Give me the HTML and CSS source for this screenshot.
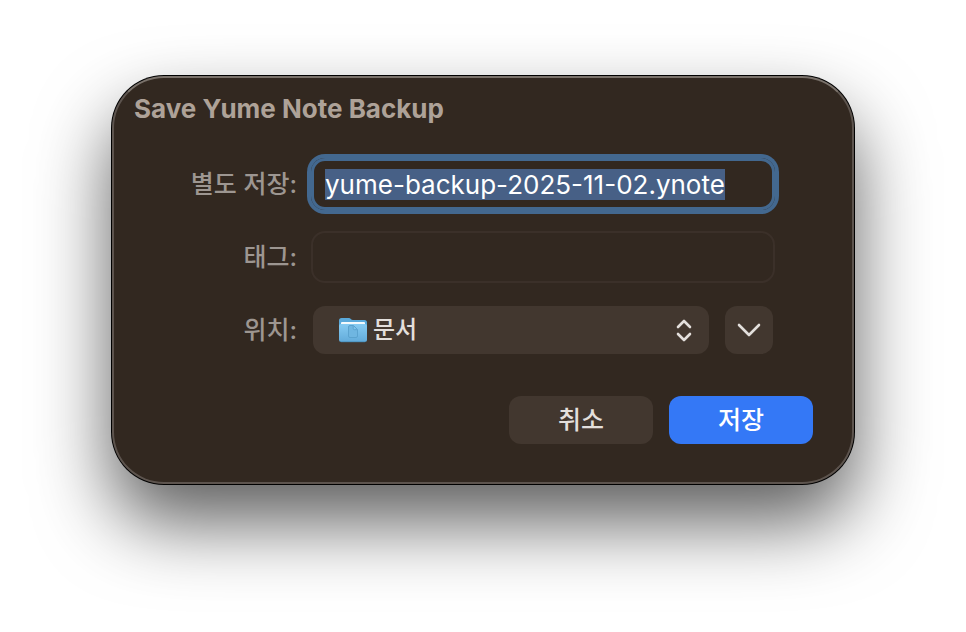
FILE: index.html
```
<!DOCTYPE html>
<html lang="ko">
<head>
    <meta charset="UTF-8">
    <meta name="viewport" content="width=device-width, initial-scale=1.0">
    <title>Save Yume Note Backup</title>
    <link rel="stylesheet" href="styles.css">
</head>
<body>
    <form class="dialog" role="dialog" aria-labelledby="dialog-title">
        <h1 class="dialog-title" id="dialog-title">Save Yume Note Backup</h1>

        <div class="fields">
            <label class="field-label" for="filename">별도 저장:</label>
            <input class="text-field filename" id="filename" type="text" value="yume-backup-2025-11-02.ynote" spellcheck="false" autocomplete="off">

            <label class="field-label" for="tags">태그:</label>
            <input class="text-field" id="tags" type="text" autocomplete="off">

            <label class="field-label" for="location">위치:</label>
            <div class="location-row">
                <div class="location">
                    <svg class="folder-icon" viewBox="0 0 28 26" aria-hidden="true">
                        <defs>
                            <linearGradient id="folder-front" x1="0" y1="0" x2="0" y2="1">
                                <stop offset="0" stop-color="#86cbf2"/>
                                <stop offset="1" stop-color="#62abda"/>
                            </linearGradient>
                        </defs>
                        <path d="M0 3.500a2.500 2.500 0 0 1 2.500-2.500h7.500c1.500 0 2 2 4 2h11.500A2.500 2.500 0 0 1 28 5.500v8H0z" fill="#5aa9da"/>
                        <rect x="2" y="5" width="24" height="6" rx="1" fill="#f4fafd"/>
                        <path d="M0 9a2 2 0 0 1 2-2h24a2 2 0 0 1 2 2V22.500a2.500 2.500 0 0 1-2.500 2.500h-23A2.500 2.500 0 0 1 0 22.500z" fill="url(#folder-front)"/>
                        <path d="M1 24.200q.7.600 1.500.600h23q.8 0 1.500-.6" fill="none" stroke="#4287b3" stroke-width=".7"/>
                        <path d="M9.500 10a1.500 1.500 0 0 1 1.500-1.500h3.500l4 4v6.500a1.500 1.500 0 0 1-1.500 1.500h-6a1.500 1.500 0 0 1-1.500-1.500zM14.200 8.700v2.800a1.200 1.200 0 0 0 1.200 1.200h2.900" fill="#6fb6e1" stroke="#5ba3cf" stroke-width="1"/>
                    </svg>
                    <select class="location-select" id="location">
                        <option>문서</option>
                    </select>
                    <svg class="updown-icon" viewBox="0 0 16 22" aria-hidden="true">
                        <path d="M2 8l6-6 6 6M2 15l6 6 6-6"/>
                    </svg>
                </div>
                <button class="expand-btn" type="button" aria-label="확장">
                    <svg class="chevron-icon" viewBox="0 0 24 14" aria-hidden="true">
                        <path d="M2 2l10 10 10-10"/>
                    </svg>
                </button>
            </div>
        </div>

        <div class="actions">
            <button class="btn" type="button">취소</button>
            <button class="btn btn-primary" type="submit">저장</button>
        </div>
    </form>

    <script>
        const filename = document.getElementById("filename");
        filename.focus();
        filename.select();
    </script>
</body>
</html>
```
FILE: styles.css
```
* {
    margin: 0;
    padding: 0;
    box-sizing: border-box;
}

body {
    font-family: Inter, "Noto Sans CJK KR", sans-serif;
    font-size: 24px;
    font-weight: 500;
    line-height: 32px;
    background: #ffffff;
    min-height: 100vh;
    padding: 76px 24px;
}

input,
select,
button {
    font: inherit;
    color: inherit;
    border: none;
    outline: none;
}

.dialog {
    max-width: 742px;
    margin: 0 auto;
    padding: 15px 0 38px;
    color: #e3dfdc;
    background: #322820;
    border: 2px solid #5d544e;
    border-top-color: #7a726b;
    border-radius: 52px;
    box-shadow: 0 0 0 1px #000000, 0 38px 76px rgba(0, 0, 0, 0.64);
}

.dialog-title {
    padding: 0 20px;
    margin-bottom: 33px;
    font-size: 26px;
    font-weight: 700;
    color: #aea298;
}

.fields {
    display: grid;
    grid-template-columns: 183px 1fr;
    grid-auto-rows: 52px;
    gap: 21px 14px;
    align-items: center;
    padding-right: 77px;
}

.field-label {
    text-align: right;
    font-size: 25px;
    color: #9d9691;
}

.text-field {
    width: 100%;
    height: 52px;
    padding: 0 12px;
    background: transparent;
    border: 2px solid #3b3029;
    border-radius: 14px;
}

.filename {
    font-size: 26px;
    font-weight: 400;
    color: #ffffff;
}

.text-field:focus {
    border: 3px solid #43688f;
    padding: 0 11px;
    box-shadow: 0 0 0 4px #43688f;
}

.text-field::selection {
    color: #ffffff;
    background: rgba(72, 97, 136, 0.99);
}

.location-row {
    display: flex;
    gap: 16px;
    padding: 0 2px;
}

.location {
    flex: 1;
    display: flex;
    align-items: center;
    gap: 6px;
    height: 48px;
    padding: 0 17px 0 26px;
    background: #42372f;
    border-radius: 12px;
}

.folder-icon {
    width: 28px;
    height: 26px;
}

.location-select {
    flex: 1;
    min-width: 0;
    height: 48px;
    appearance: none;
    background: transparent;
}

.updown-icon {
    width: 16px;
    height: 22px;
    overflow: visible;
}

.chevron-icon {
    width: 24px;
    height: 14px;
}

.updown-icon path,
.chevron-icon path {
    fill: none;
    stroke: #e3dfdc;
    stroke-width: 2.6;
    stroke-linecap: round;
    stroke-linejoin: round;
}

.expand-btn {
    display: flex;
    align-items: center;
    justify-content: center;
    width: 48px;
    height: 48px;
    background: #42372f;
    border-radius: 12px;
}

.actions {
    display: flex;
    justify-content: flex-end;
    gap: 16px;
    margin-top: 40px;
    padding-right: 39px;
}

.btn {
    width: 144px;
    height: 48px;
    font-size: 25px;
    background: #42372f;
    border-radius: 12px;
}

.btn-primary {
    color: #ffffff;
    background: #3478f6;
}
```
